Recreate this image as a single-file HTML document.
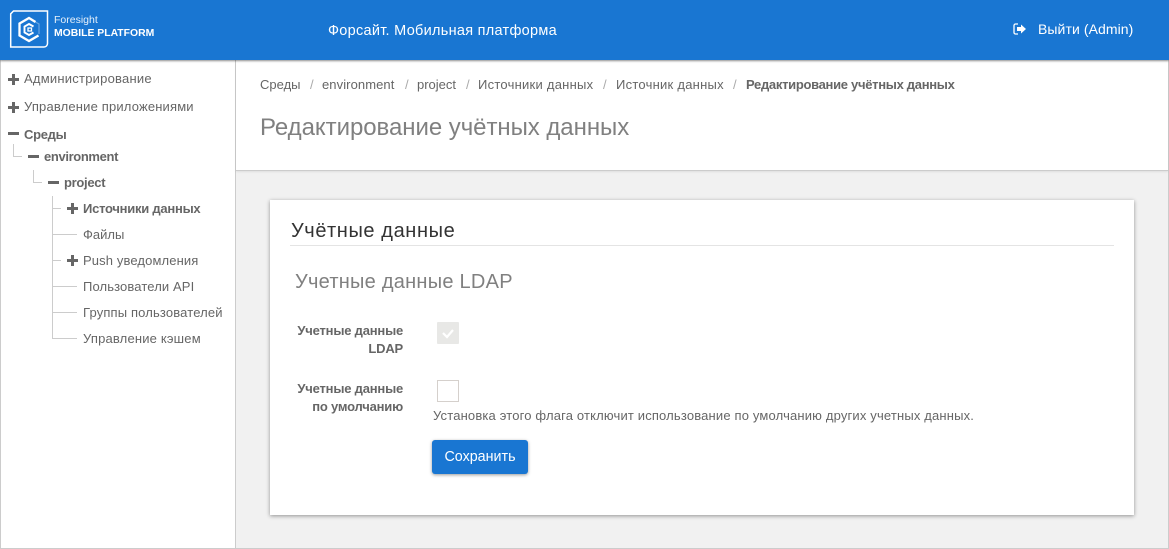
<!DOCTYPE html>
<html lang="ru"><head><meta charset="utf-8"><title>Foresight</title>
<style>
html,body{margin:0;padding:0;width:1169px;height:549px;overflow:hidden;background:#f1f1f1}
body{position:relative;font-family:"Liberation Sans",sans-serif;color:#666;font-size:13px}
.t{position:absolute;white-space:nowrap;line-height:16px}
.b{font-weight:bold}
.box{position:absolute}
.l{position:absolute;background:#ccc}
</style></head><body>
<div class="box" style="left:0;top:0;width:1169px;height:549px;box-sizing:border-box;border:1px solid #ccc;border-top:0"></div>
<div class="box" style="left:1px;top:60px;width:235px;height:488px;background:#fff;border-right:1px solid #ccc;box-sizing:border-box"></div>
<div class="box" style="left:236px;top:60px;width:932px;height:111px;background:#fff;border-bottom:1px solid #ccc;box-shadow:0 1px 2px rgba(0,0,0,.08);box-sizing:border-box"></div>
<div class="box" style="left:0;top:0;width:1169px;height:60px;background:#1976d2;box-shadow:0 1px 2px rgba(0,0,0,.45)"></div>

<svg class="box" style="left:8px;top:8px" width="42" height="42" viewBox="0 0 42 42" fill="none" stroke="#fff">
<path d="M5.500 3H39.500V35.500a3.500 3.500 0 0 1-3.500 3.500H2.700V5.800z" stroke-width="1.500"/>
<path d="M27.500 14l-6.500-4-9.500 5.500v12l9.500 5.500 9.500-5.500" stroke-width="2.300"/>
<path d="M31 26V16l-3.500-2" stroke-width="1.200" opacity=".35"/>
<path d="M25.500 18.500l-4.500-2.500-4.500 2.500v6l4.500 2.500 4.500-2.500" stroke-width="1.900"/>
<path d="M20 20h3.500v3H20z" stroke-width="1.300"/>
</svg>
<div class="t" style="left:54px;top:13px;font-size:10.500px;color:#e6f0fa;line-height:14px">Foresight</div>
<div class="t b" style="left:54px;top:27px;font-size:10.400px;color:#fff;line-height:14px">MOBILE PLATFORM</div>
<div class="t" style="left:328px;top:22px;font-size:14.500px;color:#fff;line-height:18px;letter-spacing:.28px">Форсайт. Мобильная платформа</div>
<svg class="box" style="left:1013px;top:23px" width="14" height="12" viewBox="0 0 14 12">
<path d="M5 1H2.500A1.500 1.500 0 0 0 1 2.500v7A1.500 1.500 0 0 0 2.500 11H5" fill="none" stroke="#fff" stroke-width="1.300"/>
<path d="M4 4h4V1.500L13 6 8 10.500V8H4z" fill="#fff"/>
</svg>
<div class="t" style="left:1038px;top:20px;font-size:14px;color:#fff;line-height:18px;letter-spacing:.08px">Выйти (Admin)</div>

<!-- tree lines -->
<div class="l" style="left:13px;top:144px;width:1px;height:13px"></div>
<div class="l" style="left:13px;top:156px;width:9px;height:1px"></div>
<div class="l" style="left:33px;top:170px;width:1px;height:13px"></div>
<div class="l" style="left:33px;top:182px;width:9px;height:1px"></div>
<div class="l" style="left:52px;top:196px;width:1px;height:143px"></div>
<div class="l" style="left:52px;top:208px;width:9px;height:1px"></div>
<div class="l" style="left:52px;top:234px;width:25px;height:1px"></div>
<div class="l" style="left:52px;top:260px;width:9px;height:1px"></div>
<div class="l" style="left:52px;top:286px;width:25px;height:1px"></div>
<div class="l" style="left:52px;top:312px;width:25px;height:1px"></div>
<div class="l" style="left:52px;top:338px;width:25px;height:1px"></div>
<!-- plus/minus -->
<svg class="box" style="left:0;top:60px" width="90" height="220" fill="#666">
<path d="M12 14h3v4h4v3h-4v4h-3v-4H8v-3h4z"/>
<path d="M12 42h3v4h4v3h-4v4h-3v-4H8v-3h4z"/>
<rect x="8" y="72" width="11" height="3"/>
<rect x="28" y="95" width="11" height="3"/>
<rect x="48" y="121" width="11" height="3"/>
<path d="M71 143h3v4h4v3h-4v4h-3v-4h-4v-3h4z"/>
<path d="M71 195h3v4h4v3h-4v4h-3v-4h-4v-3h4z"/>
</svg>
<div class="t" style="left:24px;top:71px;letter-spacing:.23px">Администрирование</div>
<div class="t" style="left:24px;top:99px;letter-spacing:.17px">Управление приложениями</div>
<div class="t b" style="left:24px;top:127px;letter-spacing:-.3px">Среды</div>
<div class="t b" style="left:44px;top:149px;letter-spacing:-.36px">environment</div>
<div class="t b" style="left:64px;top:175px;letter-spacing:-.3px">project</div>
<div class="t b" style="left:83px;top:201px;letter-spacing:-.25px">Источники данных</div>
<div class="t" style="left:83px;top:227px">Файлы</div>
<div class="t" style="left:83px;top:253px;letter-spacing:.12px">Push уведомления</div>
<div class="t" style="left:83px;top:279px;letter-spacing:.12px">Пользователи API</div>
<div class="t" style="left:83px;top:305px;letter-spacing:.15px">Группы пользователей</div>
<div class="t" style="left:83px;top:331px;letter-spacing:.18px">Управление кэшем</div>

<!-- breadcrumbs -->
<div class="t" style="left:260px;top:77px">Среды</div>
<div class="t" style="left:310px;top:77px;color:#aaa">/</div>
<div class="t" style="left:322px;top:77px;letter-spacing:.08px">environment</div>
<div class="t" style="left:405px;top:77px;color:#aaa">/</div>
<div class="t" style="left:417px;top:77px">project</div>
<div class="t" style="left:466px;top:77px;color:#aaa">/</div>
<div class="t" style="left:478px;top:77px;letter-spacing:.25px">Источники данных</div>
<div class="t" style="left:603px;top:77px;color:#aaa">/</div>
<div class="t" style="left:616px;top:77px;letter-spacing:.25px">Источник данных</div>
<div class="t" style="left:733px;top:77px;color:#aaa">/</div>
<div class="t b" style="left:746px;top:77px;letter-spacing:-.3px">Редактирование учётных данных</div>
<div class="t" style="left:260px;top:113px;font-size:24px;line-height:30px;color:#808080;letter-spacing:-.05px">Редактирование учётных данных</div>

<!-- card -->
<div class="box" style="left:270px;top:200px;width:864px;height:315px;background:#fff;box-shadow:0 1px 4px rgba(0,0,0,.4)"></div>
<div class="t" style="left:291px;top:219px;font-size:20px;line-height:24px;color:#333;letter-spacing:.6px">Учётные данные</div>
<div class="box" style="left:290px;top:245px;width:824px;height:1px;background:#e4e4e4"></div>
<div class="t" style="left:295px;top:269px;font-size:20px;line-height:26px;color:#808080;letter-spacing:.25px">Учетные данные LDAP</div>

<div class="t b" style="right:766px;top:322px;text-align:right;line-height:18px;letter-spacing:-.2px">Учетные данные<br>LDAP</div>
<div class="box" style="left:437px;top:322px;width:22px;height:22px;background:#e8e8e6;border-radius:1px"></div>
<svg class="box" style="left:437px;top:322px" width="22" height="22"><path d="M6 11l4 4 6-7" fill="none" stroke="#fff" stroke-width="2.200"/></svg>

<div class="t b" style="right:766px;top:380px;text-align:right;line-height:18px;letter-spacing:-.2px">Учетные данные<br>по умолчанию</div>
<div class="box" style="left:437px;top:380px;width:22px;height:22px;background:#fff;border:1px solid #d5d0cc;box-sizing:border-box"></div>
<div class="t" style="left:433px;top:408px;letter-spacing:.165px">Установка этого флага отключит использование по умолчанию других учетных данных.</div>

<div class="box" style="left:432px;top:440px;width:96px;height:34px;background:#1976d2;border-radius:3px;box-shadow:0 1px 3px rgba(0,0,0,.4);color:#fff;font-size:14.300px;line-height:35px;text-align:center">Сохранить</div>
</body></html>
